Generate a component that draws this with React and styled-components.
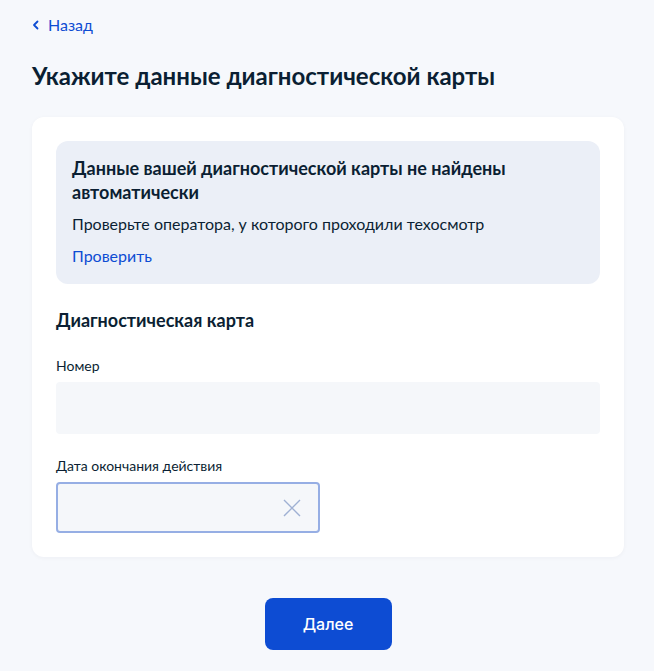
import React from 'react';
import styled, {createGlobalStyle} from 'styled-components';

const GlobalStyle = createGlobalStyle`
  html, body {
    margin: 0;
    padding: 0;
    background: #f6f8fc;
    font-family: Lato, "Noto Sans", sans-serif;
    color: #0b1f33;
  }
`;

const Page = styled.div`
  width: 654px;
  min-height: 671px;
  box-sizing: border-box;
  padding: 13px 30px 20px 32px;
  display: flex;
  flex-direction: column;
`;

const BackLink = styled.a`
  display: flex;
  align-items: center;
  gap: 8px;
  color: #0d4cd3;
  font-size: 16px;
  line-height: 24px;
  text-decoration: none;
  cursor: pointer;
`;

const Title = styled.h1`
  margin: 23px 0 0;
  font-size: 24px;
  line-height: 32px;
  font-weight: 700;
`;

const Card = styled.div`
  margin-top: 25px;
  background: #fff;
  border-radius: 12px;
  padding: 24px;
  box-shadow: 0 1px 4px rgba(11, 31, 51, 0.04);
  display: flex;
  flex-direction: column;
`;

const Notice = styled.div`
  background: #ebeff7;
  border-radius: 12px;
  padding: 15px 16px 16px;
  display: flex;
  flex-direction: column;
`;

const NoticeTitle = styled.div`
  font-size: 18px;
  line-height: 24px;
  font-weight: 700;
  margin-right: 40px;
`;

const NoticeText = styled.div`
  margin-top: 8px;
  font-size: 16px;
  line-height: 24px;
`;

const NoticeLink = styled.a`
  margin-top: 8px;
  font-size: 16px;
  line-height: 24px;
  color: #0d4cd3;
  cursor: pointer;
`;

const SectionTitle = styled.h2`
  margin: 24px 0 0;
  font-size: 18px;
  line-height: 24px;
  font-weight: 700;
`;

const Field = styled.div`
  margin-top: ${p => p.$gap}px;
  display: flex;
  flex-direction: column;
`;

const Label = styled.label`
  font-size: 14px;
  line-height: 20px;
  color: #0b1f33;
  margin-bottom: 6px;
`;

const InputBox = styled.div`
  box-sizing: border-box;
  width: ${p => p.$width || '100%'};
  height: ${p => p.$height || 52}px;
  background: #f5f7fa;
  border-radius: 4px;
  border: ${p => (p.$focused ? '2px solid #96aee4' : 'none')};
  display: flex;
  align-items: center;
  justify-content: flex-end;
  padding-right: 16px;
`;

const Footer = styled.div`
  display: flex;
  justify-content: center;
  margin-top: 41px;
`;

const Button = styled.button`
  width: 127px;
  height: 52px;
  border: none;
  border-radius: 8px;
  background: #0d4cd3;
  color: #fff;
  font-family: Inter, "Noto Sans", sans-serif;
  font-size: 16px;
  font-weight: 500;
  cursor: pointer;
`;

const Chevron = () => (
  <svg width="8" height="10" viewBox="0 0 8 10" fill="none">
    <path d="M5.5 1.5 L2 5 L5.5 8.5" stroke="#0d4cd3" strokeWidth="1.8" strokeLinecap="round" strokeLinejoin="round"/>
  </svg>
);

const Cross = () => (
  <svg width="20" height="20" viewBox="0 0 20 20" fill="none">
    <path d="M2 2 L18 18 M18 2 L2 18" stroke="#9fb0d3" strokeWidth="1.4"/>
  </svg>
);

const App = () => (
  <>
    <GlobalStyle/>
    <Page>
      <BackLink><Chevron/>Назад</BackLink>
      <Title>Укажите данные диагностической карты</Title>
      <Card>
        <Notice>
          <NoticeTitle>Данные вашей диагностической карты не найдены автоматически</NoticeTitle>
          <NoticeText>Проверьте оператора, у которого проходили техосмотр</NoticeText>
          <NoticeLink>Проверить</NoticeLink>
        </Notice>
        <SectionTitle>Диагностическая карта</SectionTitle>
        <Field $gap={24}>
          <Label>Номер</Label>
          <InputBox/>
        </Field>
        <Field $gap={22}>
          <Label>Дата окончания действия</Label>
          <InputBox $width="264px" $height={51} $focused><Cross/></InputBox>
        </Field>
      </Card>
      <Footer>
        <Button>Далее</Button>
      </Footer>
    </Page>
  </>
);

export default App;
